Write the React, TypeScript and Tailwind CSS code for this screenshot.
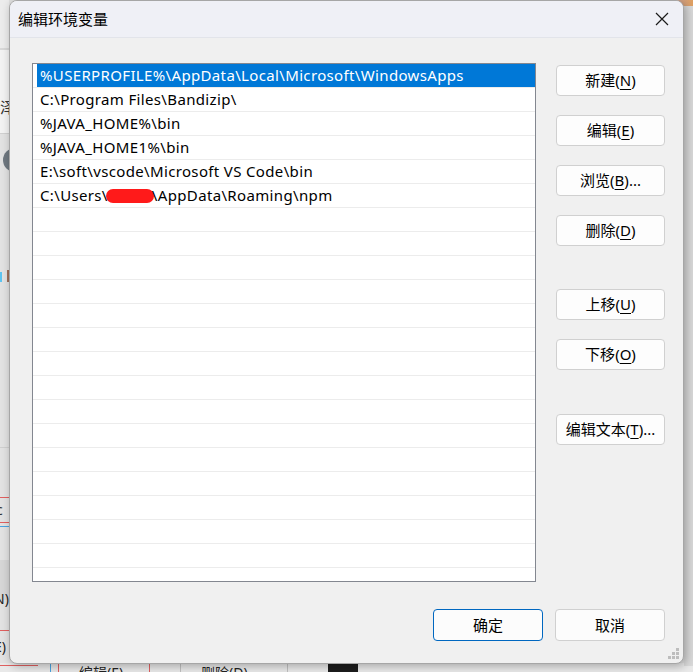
const paths = [
  "%USERPROFILE%\\AppData\\Local\\Microsoft\\WindowsApps",
  "C:\\Program Files\\Bandizip\\",
  "%JAVA_HOME%\\bin",
  "%JAVA_HOME1%\\bin",
  "E:\\soft\\vscode\\Microsoft VS Code\\bin",
];

const font = "font-['Noto_Sans','Noto_Sans_CJK_SC',sans-serif]";

function Btn({ label, hot, tail = "", className = "" }: { label: string; hot: string; tail?: string; className?: string }) {
  return (
    <button
      className={`h-[31px] w-[109px] rounded-[4px] border border-[#d0d0d0] bg-[#fdfdfd] text-[15px] leading-none text-black ${className}`}
    >
      {label}(<span className="underline underline-offset-[3px]">{hot}</span>){tail}
    </button>
  );
}

function Backdrop() {
  return (
    <>
      {/* left strip of the window behind */}
      <div className="absolute left-0 top-0 h-[672px] w-[9px] bg-[#e2e2e2]">
        <div className="h-[48px] bg-[#ececec]" />
        <div className="h-[2px] bg-[#d8d8d8]" />
        <div className="h-[83px] bg-[#f3f3f3] pt-[50px] text-[15px] leading-none text-[#333]">泽</div>
        <div className="h-[1px] bg-[#d0d0d0]" />
        <div className="mt-[14px] ml-[3px] h-[24px] w-[24px] rounded-full bg-[#6f7880]" />
      </div>
      <div className="absolute left-0 top-[272px] h-[10px] w-[2px] bg-[#5ec4f0]" />
      <div className="absolute left-[7px] top-[270px] h-[12px] w-[2px] bg-[#a0705a]" />
      <div className="absolute left-0 top-[447px] h-[1px] w-[9px] bg-[#cfcfcf]" />
      <div className="absolute left-0 top-[497px] h-[1px] w-[9px] bg-[#e06060]" />
      <div className="absolute left-[-4px] top-[503px] text-[14px] leading-none text-[#333]">c</div>
      <div className="absolute left-0 top-[522px] h-[1px] w-[9px] bg-[#e06060]" />
      <div className="absolute left-0 top-[526px] h-[1px] w-[9px] bg-[#4aa3e0]" />
      <div className="absolute left-0 top-[560px] h-[40px] w-[9px] bg-[#d6d6d6]" />
      <div className="absolute left-[-6px] top-[592px] text-[14px] leading-none text-[#222]">N)</div>
      <div className="absolute left-0 top-[630px] h-[1px] w-[9px] bg-[#e06060]" />
      <div className="absolute left-[-6px] top-[640px] text-[14px] leading-none text-[#222]">E)</div>
      {/* bottom strip */}
      <div className="absolute left-0 top-[663px] flex h-[9px] w-[693px] bg-[#e9e9e9]">
        <div className="h-[3px] w-[38px] border-b border-[#e06060]" />
        <div className="ml-[12px] h-[9px] w-[1px] bg-[#4aa3e0]" />
        <div className="ml-[7px] h-[9px] w-[1px] bg-[#e06060]" />
        <div className="ml-[20px] w-[70px] overflow-hidden text-[14px] leading-[20px] text-[#222]">编辑(E)</div>
        <div className="h-[9px] w-[1px] bg-[#e06060]" />
        <div className="ml-[30px] h-[9px] w-[1px] bg-[#c0c0c0]" />
        <div className="ml-[20px] w-[70px] overflow-hidden text-[14px] leading-[20px] text-[#222]">删除(D)</div>
        <div className="ml-[16px] h-[9px] w-[1px] bg-[#c0c0c0]" />
        <div className="ml-[40px] h-[9px] w-[30px] bg-[#1c1c1c]" />
      </div>
      {/* desktop peeking at the top right */}
      <div className="absolute right-0 top-0 h-[6px] w-[40px] bg-gradient-to-r from-[#b9a5c9] to-[#e0a060]" />
      <div className="absolute right-0 top-[6px] h-[660px] w-[9px] bg-[#d9d9d9]" />
    </>
  );
}

export default function App() {
  return (
    <div className={`relative h-[672px] w-[693px] overflow-hidden bg-[#e0e0e0] ${font}`}>
      <Backdrop />
      <div className="relative ml-[9px] flex h-[664px] w-[675px] flex-col overflow-hidden rounded-[8px] border border-[#a6a6a6] bg-[#f0f0f0] shadow-[2px_2px_10px_rgba(0,0,0,0.3)]">
        {/* title bar */}
        <div className="flex h-[37px] shrink-0 items-center justify-between border-b border-[#e2e4ea] bg-[#eff0f6] pl-[8px] pr-[14px]">
          <span className="text-[15px] text-black">编辑环境变量</span>
          <svg width="14" height="14" viewBox="0 0 14 14">
            <path d="M1 1L13 13M13 1L1 13" stroke="#1a1a1a" strokeWidth="1.2" />
          </svg>
        </div>

        {/* body */}
        <div className="flex pl-[22px] pr-[18px] pt-[25px]">
          <div className="h-[519px] w-[504px] overflow-hidden border border-[#838790] bg-white text-[15px] tracking-[0.35px]">
            {Array.from({ length: 22 }).map((_, i) => (
              <div key={i} className="flex h-[24px] border-b border-[#ececec] pl-[4px]">
                {i === 0 ? (
                  <div className="flex w-full items-center bg-[#0078d7] pl-[3px] text-white">{paths[0]}</div>
                ) : i < paths.length ? (
                  <div className="flex items-center pl-[3px] text-black">{paths[i]}</div>
                ) : i === paths.length ? (
                  <div className="flex items-center pl-[3px] text-black">
                    C:\Users\
                    <span className="mx-[-2px] inline-block h-[14px] w-[48px] rounded-[7px] bg-[#ff1a1a]" />
                    \AppData\Roaming\npm
                  </div>
                ) : null}
              </div>
            ))}
          </div>

          <div className="ml-[20px] mt-[2px] flex flex-col">
            <Btn label="新建" hot="N" />
            <Btn label="编辑" hot="E" className="mt-[19px]" />
            <Btn label="浏览" hot="B" tail="..." className="mt-[19px]" />
            <Btn label="删除" hot="D" className="mt-[19px]" />
            <Btn label="上移" hot="U" className="mt-[43px]" />
            <Btn label="下移" hot="O" className="mt-[19px]" />
            <Btn label="编辑文本" hot="T" tail="..." className="mt-[44px]" />
          </div>
        </div>

        {/* footer */}
        <div className="flex justify-end gap-[12px] pr-[18px] pt-[27px]">
          <button className="h-[32px] w-[110px] rounded-[4px] border border-[#0067c0] bg-[#fcfcfc] text-[15px] text-black">
            确定
          </button>
          <button className="h-[32px] w-[110px] rounded-[4px] border border-[#d0d0d0] bg-[#fcfcfc] text-[15px] text-black">
            取消
          </button>
        </div>

        {/* resize grip */}
        <svg className="absolute bottom-[3px] right-[3px]" width="12" height="12" viewBox="0 0 12 12">
          <rect x="8" y="0" width="3" height="3" fill="#bdbdbd" />
          <rect x="4" y="4" width="3" height="3" fill="#bdbdbd" />
          <rect x="8" y="4" width="3" height="3" fill="#bdbdbd" />
          <rect x="0" y="8" width="3" height="3" fill="#bdbdbd" />
          <rect x="4" y="8" width="3" height="3" fill="#bdbdbd" />
          <rect x="8" y="8" width="3" height="3" fill="#bdbdbd" />
        </svg>
      </div>
    </div>
  );
}
